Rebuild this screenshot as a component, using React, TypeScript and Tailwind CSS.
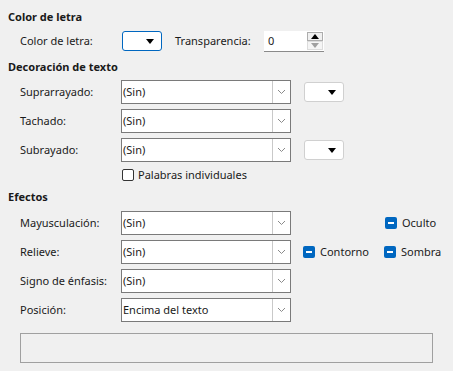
const font = { fontFamily: '"Noto Sans", "Open Sans", sans-serif' };

const Chevron = () => (
  <svg width="9" height="6" viewBox="0 0 9 6" className="block">
    <path d="M1 1 L4.5 4.5 L8 1" fill="none" stroke="#8a8a8a" strokeWidth="1" />
  </svg>
);

const Tri = ({ up = false, color = '#000' }: { up?: boolean; color?: string }) => (
  <svg width="8" height="5" viewBox="0 0 8 5" className="block">
    <path d={up ? 'M0 5 L4 0 L8 5 Z' : 'M0 0 L8 0 L4 5 Z'} fill={color} />
  </svg>
);

const Combo = ({ value }: { value: string }) => (
  <div className="w-[170px] h-[24px] bg-white border border-[#7a7a7a] flex items-stretch shrink-0">
    <div className="flex-1 flex items-center pl-[1px] text-[11px] text-[#1a1a1a]">{value}</div>
    <div className="w-[18px] border-l border-[#c9c9c9] flex items-center justify-center">
      <Chevron />
    </div>
  </div>
);

const ColorBtn = ({ active = false }: { active?: boolean }) => (
  <div
    className={`w-[40px] h-[20px] bg-white rounded-[3px] flex items-center justify-end pr-[7px] shrink-0 border ${
      active ? 'border-[#0067c0]' : 'border-[#d0d0d0]'
    }`}
  >
    <Tri />
  </div>
);

const Check = ({ label }: { label: string }) => (
  <div className="flex items-center gap-[5px]">
    <div className="w-[12px] h-[12px] rounded-[2px] bg-[#0067c0] flex items-center justify-center">
      <div className="w-[6px] h-[1.5px] bg-white" />
    </div>
    <span className="text-[11px] text-[#1a1a1a]">{label}</span>
  </div>
);

const Row = ({ label, children, className = '' }: { label: string; children: React.ReactNode; className?: string }) => (
  <div className={`flex items-center h-[24px] pl-3 ${className}`}>
    <span className="w-[101px] shrink-0 text-[11px] text-[#1a1a1a]">{label}</span>
    {children}
  </div>
);

const Heading = ({ children, className = '' }: { children: React.ReactNode; className?: string }) => (
  <div className={`h-[16px] leading-[16px] text-[11px] font-bold text-[#1a1a1a] ${className}`}>{children}</div>
);

export default function App() {
  return (
    <div className="w-[453px] h-[371px] bg-[#f0f0f0] px-2 pt-[9px] overflow-hidden leading-[16px]" style={font}>
      <Heading>Color de letra</Heading>

      <div className="flex items-center h-[20px] pl-3 mt-[6px]">
        <span className="w-[102px] shrink-0 text-[11px] text-[#1a1a1a]">Color de letra:</span>
        <ColorBtn active />
        <span className="ml-[13px] w-[89px] text-[11px] text-[#1a1a1a]">Transparencia:</span>
        <div className="flex h-[21px] bg-white border-b border-[#8a8a8a]">
          <div className="w-[43px] flex items-center pl-[4px] text-[11px] text-[#1a1a1a]">0</div>
          <div className="w-[17px] flex flex-col py-[1px] pr-[1px]">
            <div className="h-[10px] border border-[#adadad] bg-[#f0f0f0] flex items-center justify-center">
              <Tri up />
            </div>
            <div className="h-[9px] border border-[#dcdcdc] bg-[#f5f5f5] flex items-center justify-center">
              <Tri color="#a0a0a0" />
            </div>
          </div>
        </div>
      </div>

      <Heading className="mt-[8px]">Decoración de texto</Heading>

      <Row label="Suprarrayado:" className="mt-[5px]">
        <Combo value="(Sin)" />
        <div className="ml-[13px]">
          <ColorBtn />
        </div>
      </Row>
      <Row label="Tachado:" className="mt-[5px]">
        <Combo value="(Sin)" />
      </Row>
      <Row label="Subrayado:" className="mt-[5px]">
        <Combo value="(Sin)" />
        <div className="ml-[13px]">
          <ColorBtn />
        </div>
      </Row>

      <div className="flex items-center h-[16px] mt-[5px] pl-[114px] gap-[4px]">
        <div className="w-[12px] h-[12px] rounded-[2px] border border-[#333] bg-white" />
        <span className="text-[11px] text-[#1a1a1a]">Palabras individuales</span>
      </div>

      <Heading className="mt-[6px]">Efectos</Heading>

      <Row label="Mayusculación:" className="mt-[6px]">
        <Combo value="(Sin)" />
        <div className="ml-[94px]">
          <Check label="Oculto" />
        </div>
      </Row>
      <Row label="Relieve:" className="mt-[5px]">
        <Combo value="(Sin)" />
        <div className="ml-[12px]">
          <Check label="Contorno" />
        </div>
        <div className="ml-[15px]">
          <Check label="Sombra" />
        </div>
      </Row>
      <Row label="Signo de énfasis:" className="mt-[5px]">
        <Combo value="(Sin)" />
      </Row>
      <Row label="Posición:" className="mt-[5px]">
        <Combo value="Encima del texto" />
      </Row>

      <div className="ml-3 mt-[11px] w-[413px] h-[30px] border border-[#a0a0a0]" />
    </div>
  );
}
